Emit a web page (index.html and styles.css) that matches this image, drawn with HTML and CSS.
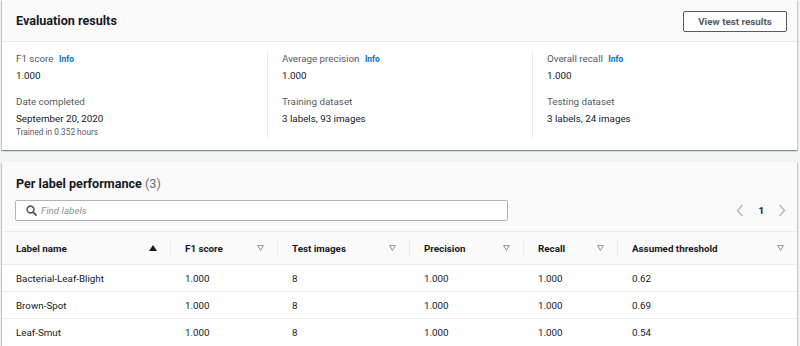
FILE: index.html
```html
<!DOCTYPE html>
<html lang="en">

<head>
    <meta charset="UTF-8">
    <meta name="viewport" content="width=device-width, initial-scale=1.0">
    <title>Evaluation results</title>
    <link rel="stylesheet" href="styles.css">
</head>

<body>
    <div class="page">
        <section class="card">
            <header class="card_head">
                <h2>Evaluation results</h2>
                <button class="btn">View test results</button>
            </header>
            <div class="metrics">
                <div class="metric_col">
                    <div class="label">F1 score <a class="info">Info</a></div>
                    <div class="value">1.000</div>
                    <div class="label spaced">Date completed</div>
                    <div class="value">September 20, 2020</div>
                    <div class="note">Trained in 0.352 hours</div>
                </div>
                <div class="metric_col">
                    <div class="label">Average precision <a class="info">Info</a></div>
                    <div class="value">1.000</div>
                    <div class="label spaced">Training dataset</div>
                    <div class="value">3 labels, 93 images</div>
                </div>
                <div class="metric_col">
                    <div class="label">Overall recall <a class="info">Info</a></div>
                    <div class="value">1.000</div>
                    <div class="label spaced">Testing dataset</div>
                    <div class="value">3 labels, 24 images</div>
                </div>
            </div>
        </section>

        <section class="card">
            <div class="table_head">
                <h2>Per label performance <span class="count">(3)</span></h2>
                <div class="tools">
                    <label class="search">
                        <svg width="11" height="11" viewBox="0 0 11 11">
                            <circle cx="4.5" cy="4.5" r="3.4" fill="none" stroke="#545b64" stroke-width="1.6" />
                            <path d="M7 7 L10 10" stroke="#545b64" stroke-width="1.8" stroke-linecap="round" />
                        </svg>
                        <input type="text" placeholder="Find labels">
                    </label>
                    <div class="pager">
                        <svg width="8" height="13" viewBox="0 0 8 13">
                            <path d="M6.5 1 L1.5 6.5 L6.5 12" fill="none" stroke="#aab7b8" stroke-width="1.3" />
                        </svg>
                        <span class="page_num">1</span>
                        <svg width="8" height="13" viewBox="0 0 8 13">
                            <path d="M1.5 1 L6.5 6.5 L1.5 12" fill="none" stroke="#aab7b8" stroke-width="1.3" />
                        </svg>
                    </div>
                </div>
            </div>
            <table class="perf">
                <colgroup>
                    <col style="width: 169px">
                    <col style="width: 107px">
                    <col style="width: 132px">
                    <col style="width: 114px">
                    <col style="width: 94px">
                    <col>
                </colgroup>
                <thead>
                    <tr>
                        <th><div class="th_inner">Label name
                            <svg width="8" height="6" viewBox="0 0 8 6"><path d="M0 6 L4 0 L8 6 Z" fill="#16191f" /></svg></div></th>
                        <th><div class="th_inner">F1 score
                            <svg class="sort" width="7" height="6" viewBox="0 0 7 6"><path d="M0.6 0.6 H6.4 L3.5 5.4 Z" fill="none" stroke="#879596" /></svg></div></th>
                        <th><div class="th_inner">Test images
                            <svg class="sort" width="7" height="6" viewBox="0 0 7 6"><path d="M0.6 0.6 H6.4 L3.5 5.4 Z" fill="none" stroke="#879596" /></svg></div></th>
                        <th><div class="th_inner">Precision
                            <svg class="sort" width="7" height="6" viewBox="0 0 7 6"><path d="M0.6 0.6 H6.4 L3.5 5.4 Z" fill="none" stroke="#879596" /></svg></div></th>
                        <th><div class="th_inner">Recall
                            <svg class="sort" width="7" height="6" viewBox="0 0 7 6"><path d="M0.6 0.6 H6.4 L3.5 5.4 Z" fill="none" stroke="#879596" /></svg></div></th>
                        <th><div class="th_inner last">Assumed threshold
                            <svg class="sort" width="7" height="6" viewBox="0 0 7 6"><path d="M0.6 0.6 H6.4 L3.5 5.4 Z" fill="none" stroke="#879596" /></svg></div></th>
                    </tr>
                </thead>
                <tbody>
                    <tr>
                        <td>Bacterial-Leaf-Blight</td>
                        <td>1.000</td>
                        <td>8</td>
                        <td>1.000</td>
                        <td>1.000</td>
                        <td>0.62</td>
                    </tr>
                    <tr>
                        <td>Brown-Spot</td>
                        <td>1.000</td>
                        <td>8</td>
                        <td>1.000</td>
                        <td>1.000</td>
                        <td>0.69</td>
                    </tr>
                    <tr>
                        <td>Leaf-Smut</td>
                        <td>1.000</td>
                        <td>8</td>
                        <td>1.000</td>
                        <td>1.000</td>
                        <td>0.54</td>
                    </tr>
                </tbody>
            </table>
        </section>
    </div>
</body>

</html>
```

FILE: styles.css
```css
* {
    margin: 0;
    padding: 0;
    box-sizing: border-box;
}

body {
    background: #f2f3f3;
    font-family: Roboto, "Liberation Sans", sans-serif;
    font-size: 9.8px;
    color: #16191f;
}

.page {
    display: flex;
    flex-flow: column;
    gap: 12px;
    padding: 0 3px 0 2px;
}

.card {
    background: white;
    box-shadow: 0 1px 1px 0 rgba(0, 28, 36, .3), 1px 1px 1px 0 rgba(0, 28, 36, .15), -1px 1px 1px 0 rgba(0, 28, 36, .15);
}

h2 {
    font-size: 12.6px;
    font-weight: bold;
    line-height: 16px;
}

.card_head {
    height: 42px;
    display: flex;
    align-items: center;
    justify-content: space-between;
    padding: 0 10px 0 14px;
    background: #fafafa;
    border-bottom: 1px solid #eaeded;
}

.btn {
    width: 104px;
    height: 21px;
    margin-top: 1px;
    border: 1px solid #545b64;
    border-radius: 2px;
    background: white;
    font-family: inherit;
    font-size: 9.8px;
    font-weight: bold;
    color: #545b64;
}

.metrics {
    display: grid;
    grid-template-columns: repeat(3, 1fr);
    padding: 9px 0 12px;
}

.metric_col {
    padding: 0 14px;
    border-left: 1px solid #eaeded;
}

.metric_col:first-child {
    border-left: none;
}

.label {
    line-height: 16px;
    color: #545b64;
}

.label.spaced {
    margin-top: 10px;
}

.info {
    margin-left: 3px;
    font-size: 8.4px;
    font-weight: bold;
    color: #0073bb;
}

.value {
    line-height: 17px;
}

.note {
    font-size: 8.3px;
    line-height: 11px;
    color: #545b64;
}

.table_head {
    padding: 14px 11px 10px 13px;
    background: #fafafa;
}

.table_head h2 {
    padding-left: 1px;
}

.count {
    font-weight: normal;
    color: #687078;
}

.tools {
    display: flex;
    align-items: center;
    justify-content: space-between;
    margin-top: 8px;
}

.search {
    width: 493px;
    height: 21px;
    display: flex;
    align-items: center;
    gap: 4px;
    padding: 0 10px;
    background: white;
    border: 1px solid #aab7b8;
    border-radius: 2px;
}

.search input {
    flex: 1;
    border: none;
    outline: none;
    font-family: inherit;
    font-size: 9.8px;
}

.search input::placeholder {
    font-style: italic;
    color: #879596;
}

.pager {
    display: flex;
    align-items: center;
    gap: 14px;
}

.page_num {
    font-weight: bold;
}

.perf {
    width: 100%;
    border-collapse: collapse;
    table-layout: fixed;
}

.perf th {
    height: 33px;
    padding: 0;
    background: #fafafa;
    border-top: 1px solid #eaeded;
    border-bottom: 1px solid #eaeded;
    text-align: left;
    font-weight: bold;
}

.th_inner {
    height: 18px;
    display: flex;
    align-items: center;
    justify-content: space-between;
    padding: 0 13px 0 14px;
    border-right: 1px solid #eaeded;
}

.th_inner.last {
    border-right: none;
}

.perf td {
    height: 27px;
    padding: 0 14px;
    border-bottom: 1px solid #eaeded;
}

.perf tr:last-child td {
    border-bottom: none;
}
```
